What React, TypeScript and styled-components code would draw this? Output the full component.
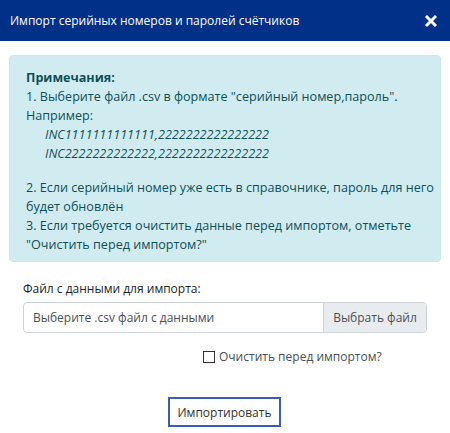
import React from "react";
import styled, { createGlobalStyle } from "styled-components";

const Global = createGlobalStyle`
  html, body { margin: 0; padding: 0; background: #fff; }
  body { font-family: "Open Sans", "Noto Sans", sans-serif; }
  * { box-sizing: border-box; }
`;

const Modal = styled.div`
  width: 450px;
  height: 433px;
  background: #fff;
  display: flex;
  flex-direction: column;
`;

const Header = styled.div`
  height: 41px;
  background: #013088;
  display: flex;
  align-items: center;
  justify-content: space-between;
  padding: 0 12px 0 10px;
  color: #fff;
`;

const Title = styled.div`
  font-family: "Open Sans", sans-serif;
  font-size: 12px;
`;

const Close = styled.button`
  border: 0;
  background: transparent;
  padding: 0;
  width: 14px;
  height: 14px;
  display: flex;
  cursor: pointer;
`;

const Body = styled.div`
  padding: 14px 9px 0 9px;
  display: flex;
  flex-direction: column;
`;

const Alert = styled.div`
  background: #d1ecf1;
  border: 1px solid #c9e8ee;
  border-radius: 4px;
  color: #0c4f5a;
  font-size: 12.6px;
  line-height: 19px;
  padding: 12px 8px 11px 16px;
  height: 207px;
  overflow: hidden;
`;

const Line = styled.div<{ $indent?: boolean; $gap?: boolean }>`
  padding-left: ${(p) => (p.$indent ? "19px" : "0")};
  font-style: ${(p) => (p.$indent ? "italic" : "normal")};
  margin-top: ${(p) => (p.$gap ? "15px" : "0")};
  white-space: nowrap;
`;

const Strong = styled.div`
  font-weight: 700;
`;

const Form = styled.div`
  padding: 17px 23px 0 23px;
  display: flex;
  flex-direction: column;
  color: #212529;
  font-size: 12px;
`;

const Label = styled.div`
  line-height: 19px;
  margin-bottom: 4px;
`;

const FileGroup = styled.div`
  display: flex;
  height: 31px;
  border: 1px solid #ced4da;
  border-radius: 4px;
  overflow: hidden;
`;

const FileText = styled.div`
  flex: 1;
  display: flex;
  align-items: center;
  padding-left: 9px;
  color: #495057;
`;

const FileButton = styled.div`
  width: 103px;
  background: #e9ecef;
  border-left: 1px solid #ced4da;
  display: flex;
  align-items: center;
  justify-content: center;
  color: #495057;
`;

const CheckRow = styled.label`
  display: flex;
  align-items: center;
  gap: 4px;
  margin: 14px 0 0 180px;
  color: #495057;
  line-height: 19px;
`;

const Box = styled.span`
  width: 12px;
  height: 12px;
  border: 1px solid #333;
  background: #fff;
  display: inline-block;
`;

const Footer = styled.div`
  display: flex;
  justify-content: center;
  padding-top: 31px;
`;

const ImportButton = styled.button`
  width: 113px;
  height: 30px;
  border: 2px solid #3a5fb0;
  background: #fff;
  color: #333;
  font-family: "Open Sans", sans-serif;
  font-size: 12px;
  padding: 0;
  margin-left: -1px;
`;

export default function App() {
  return (
    <>
      <Global />
      <Modal>
        <Header>
          <Title>Импорт серийных номеров и паролей счётчиков</Title>
          <Close aria-label="close">
            <svg width="14" height="14" viewBox="0 0 14 14">
              <path d="M2 2 L12 12 M12 2 L2 12" stroke="#fff" strokeWidth="3" strokeLinecap="butt" />
            </svg>
          </Close>
        </Header>
        <Body>
          <Alert>
            <Strong>Примечания:</Strong>
            <Line>1. Выберите файл .csv в формате "серийный номер,пароль".</Line>
            <Line>Например:</Line>
            <Line $indent>INC1111111111111,2222222222222222</Line>
            <Line $indent>INC2222222222222,2222222222222222</Line>
            <Line $gap>2. Если серийный номер уже есть в справочнике, пароль для него</Line>
            <Line>будет обновлён</Line>
            <Line>3. Если требуется очистить данные перед импортом, отметьте</Line>
            <Line>"Очистить перед импортом?"</Line>
          </Alert>
        </Body>
        <Form>
          <Label>Файл с данными для импорта:</Label>
          <FileGroup>
            <FileText>Выберите .csv файл с данными</FileText>
            <FileButton>Выбрать файл</FileButton>
          </FileGroup>
          <CheckRow>
            <Box />
            Очистить перед импортом?
          </CheckRow>
        </Form>
        <Footer>
          <ImportButton>Импортировать</ImportButton>
        </Footer>
      </Modal>
    </>
  );
}
